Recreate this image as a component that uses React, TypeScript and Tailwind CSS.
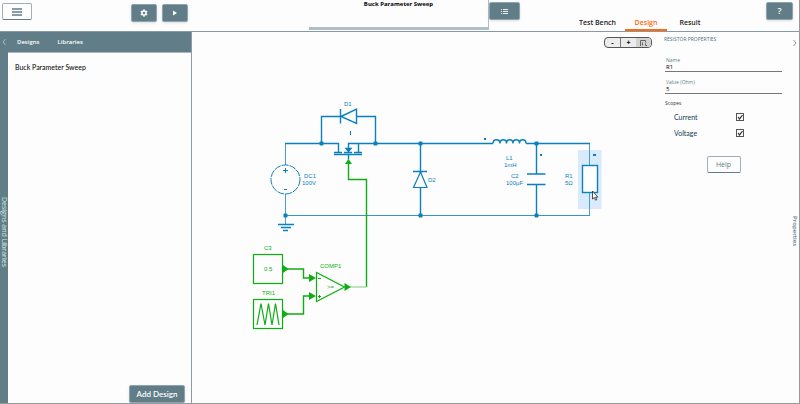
import React, { useState } from 'react';

const BLUE = '#0a81bd';
const GREEN = '#0cae12';

const solidButton =
  'flex items-center justify-center rounded-xs bg-[#607d88] text-white border border-[#8fa5ae] shadow-sm';

function Header({ tab, onTab }: { tab: string; onTab: (t: string) => void }) {
  return (
    <header className="flex h-8 shrink-0 items-start border-b border-[#8799a5] pl-[2px] pr-[6px]">
      <button aria-label="Menu" className="mt-[3px] flex h-[17px] w-[30px] items-center justify-center rounded-xs border border-[#9db0ba] border-b-[#607d88]">
        <svg width="10" height="8" stroke="#607d88" strokeWidth="1.3">
          <path d="M0 1h10M0 4h10M0 7h10" />
        </svg>
      </button>
      <div className="ml-[99px] mt-1 flex gap-[5px]">
        <button aria-label="Settings" className={`${solidButton} h-[18px] w-[26px]`}>
          <svg width="8" height="8" viewBox="0 0 8 8">
            <circle cx="4" cy="4" r="2" fill="none" stroke="#fff" strokeWidth="1.5" />
            <path d="M4 .3v1.4M4 6.3v1.4M.8 2.1l1.2.7M6 5.2l1.2.7M.8 5.9L2 5.2M6 2.8l1.2-.7" stroke="#fff" strokeWidth="1.4" />
          </svg>
        </button>
        <button aria-label="Run" className={`${solidButton} h-[18px] w-[26px]`}>
          <svg width="4" height="6" fill="#fff">
            <path d="M0 .5L4 3 0 5.500z" />
          </svg>
        </button>
      </div>
      <div className="ml-[121px] h-[30px] min-w-0 flex-1 border-b-[3px] border-r border-[#b0bec5] text-center">
        <h1 className="whitespace-nowrap text-[6px] font-bold leading-[8px] text-black">Buck Parameter Sweep</h1>
      </div>
      <button aria-label="List" className={`${solidButton} mt-[2px] h-[18px] w-[31px]`}>
        <svg width="7" height="7" fill="none" stroke="#e8eef0">
          <path d="M0 1.500h1M2 1.500h5M0 3.500h1M2 3.500h5M0 5.500h1M2 5.500h5" />
        </svg>
      </button>
      <nav className="ml-[52px] flex h-8 gap-[2px] self-end text-[7px] font-semibold leading-[8px]">
        {['Test Bench', 'Design', 'Result'].map((name) => (
          <button
            key={name}
            onClick={() => onTab(name)}
            className={`flex min-w-[42px] items-end justify-center border-b px-[7px] pb-[3px] ${
              tab === name ? 'border-[#ff6a0d] text-[#ff6a0d] shadow-[inset_0_-1px_0_#ff6a0d]' : 'border-transparent text-[#222]'
            }`}
          >
            {name}
          </button>
        ))}
      </nav>
      <button aria-label="Help" className={`${solidButton} ml-[55px] mt-[2px] h-[18px] w-[27px] text-[9px] font-semibold`}>
        ?
      </button>
    </header>
  );
}

function DesignsPanel() {
  return (
    <aside className="flex w-48 shrink-0 border-r border-[#8c9ca4]">
      <div className="flex w-2 shrink-0 flex-col items-center bg-[#607d88] text-[#dfe7ea]">
        <svg className="mt-[7px]" width="4" height="6" fill="none" stroke="#a9bac1">
          <path d="M3.500 0L1 3l2.500 3" />
        </svg>
        <span className="mt-[152px] whitespace-nowrap text-[7px] leading-[8px] [writing-mode:vertical-rl]">Designs and Libraries</span>
      </div>
      <div className="flex min-w-0 flex-1 flex-col">
        <div className="flex h-[21px] items-center gap-[18px] border-b border-[#a9b6bb] bg-[#607d88] px-[9px] text-[6px] font-semibold leading-[8px] text-white">
          <button>Designs</button>
          <button>Libraries</button>
        </div>
        <ul className="flex-1 px-[7px] pt-[10px] font-['Lato','Open_Sans',sans-serif] text-[7px] leading-[8px] text-black">
          <li>Buck Parameter Sweep</li>
        </ul>
        <div className="flex justify-end pr-[6px]">
          <button className={`${solidButton} h-[18px] w-[56px] whitespace-nowrap font-['Lato','Open_Sans',sans-serif] text-[8px] font-semibold leading-[10px]`}>Add Design</button>
        </div>
      </div>
    </aside>
  );
}

function Node({ x, y }: { x: number; y: number }) {
  return <rect x={x - 2} y={y - 2} width="4" height="4" rx="1" fill={BLUE} />;
}

function Schematic() {
  return (
    <svg viewBox="192 32 464 371" className="h-full w-full" fontSize="6" fontFamily="'Liberation Sans', Arial, sans-serif">
      {/* selection behind R1 */}
      <rect x="578" y="150" width="23.500" height="59" fill="#d8eafb" />

      <g fill="none" stroke={BLUE} strokeWidth="1.4">
        {/* thin wires */}
        <g stroke="#4a9fcb" strokeWidth="1">
          <path d="M285.500 143.500V165M285.500 194v30M589.500 143.500V165M589.500 193v22.500" />
          <path d="M285.500 215.500H590" strokeWidth="1.200" stroke="#3894c4" />
        </g>
        {/* top rail */}
        <path d="M285 143.500h53.500v9M348.500 152v-8.500H493M526 143.500h64M358.500 143.500v9" />
        {/* MOSFET */}
        <path d="M334 152.500h8M344 152.500h8M354 152.500h8M334 154.500h28M348.500 154.500v5" />
        <path d="M346 148.500h5l-2.500 3z" fill={BLUE} />
        <path d="M350.500 131v4" strokeWidth="1" />
        {/* D1 */}
        <path d="M321.500 143.500v-27H340M340.500 109v14.500M341 116.500l15.500-7.500v14.500zM356.500 116.500h19v27" />
        {/* source */}
        <circle cx="285.500" cy="179.500" r="14.500" strokeWidth="1" strokeDasharray="7 1" />
        <path d="M283 170.500h5M285.500 168v5M284 189.500h3" strokeWidth="1" />
        {/* ground */}
        <path d="M278 224.500h16M281 227.500h10M283 230.500h5" />
        {/* D2 */}
        <path d="M420.500 143.500V215.500M413 171.500h14" />
        <path d="M420.500 172l6.500 15.500h-13.500z" fill="#fdfdfd" strokeWidth="1.2" />
        {/* L1 */}
        <path d="M493 143.500c0-5 7-5 7 0 0-5 6.500-5 6.500 0 0-5 6.500-5 6.500 0 0-5 6.500-5 6.500 0 0-5 6.500-5 6.500 0" />
        {/* C2 */}
        <path d="M536.500 143.500V174M536.500 185v30.500M527 174h18.500M527 184.500h18.500" />
        {/* R1 */}
        <rect x="582.500" y="165.500" width="15" height="27" fill="#fff" />
      </g>

      <Node x={321.5} y={143.5} />
      <Node x={375.5} y={143.5} />
      <Node x={420.5} y={143.5} />
      <Node x={536.5} y={143.5} />
      <Node x={285.5} y={215.5} />
      <Node x={420.5} y={215.5} />
      <Node x={536.5} y={215.5} />
      <g fill={BLUE}>
        <path d="M484 138h2v2h-2zM540 154h2v2h-2zM593 154h3v2h-3z" />
        <text x="344" y="106">D1</text>
        <text x="304" y="178">DC1</text>
        <text x="302" y="185">100V</text>
        <text x="428" y="182">D2</text>
        <text x="506" y="160">L1</text>
        <text x="504" y="167">1mH</text>
        <text x="511" y="178">C2</text>
        <text x="506" y="185">100µF</text>
        <text x="565" y="178">R1</text>
        <text x="565" y="185">5Ω</text>
      </g>

      <g fill="none" stroke={GREEN} strokeWidth="1.4">
        {/* gate drive */}
        <path d="M348.500 163v16.500h18v107.500" />
        <path d="M366.500 287H350" stroke="#9bdc9d" />
        <path d="M282.500 269h21v9H310M282.500 314h21v-18H310" />
        <rect x="253.500" y="254.500" width="29" height="29" strokeWidth="1.2" />
        <rect x="253.500" y="299.500" width="29" height="29" strokeWidth="1.2" />
        <path d="M257 325l4-21.500 4 21.500 3.500-21.500 3.500 21.500 3.500-21.500 3.500 21.500" strokeWidth="1.2" />
        <path d="M316.500 272.500v29l28-14.500z" strokeWidth="1.2" />
        <path d="M318 278.500h3M318 296.500h3M319.500 295v3" strokeWidth="1" />
      </g>
      <g fill={GREEN}>
        <path d="M348.500 159l3.500 5h-7zM283 265l5.500 4-5.500 4zM283 310l5.500 4-5.500 4zM309 274l7 4-7 4zM309 292l7 4-7 4zM344.500 283l6.500 4-6.500 4z" />
        <text x="264" y="250">C3</text>
        <text x="264" y="271">0.5</text>
        <text x="262" y="295">TRI1</text>
        <text x="320" y="268">COMP1</text>
        <text x="327" y="289">&gt;=</text>
      </g>

      {/* pointer */}
      <path d="M592.500 191v8l1.900-1.500 1.200 2.700 1.100-.5-1.100-2.600h2.200z" fill="#fff" stroke="#222" strokeWidth=".8" />
    </svg>
  );
}

function Canvas() {
  return (
    <main className="relative min-w-0 flex-1">
      <Schematic />
      <div className="absolute right-[4px] top-[5px] flex h-[11px] w-12 overflow-hidden rounded-sm border border-[#555] bg-[#ececec] text-[7px] font-bold leading-[8px] text-black">
        <button aria-label="Zoom out" className="flex-1 border-r border-[#777]">-</button>
        <button aria-label="Zoom in" className="flex-1">+</button>
        <button aria-label="Zoom to fit" className="flex flex-1 items-center justify-center bg-[#d3d3d3]">
          <svg width="7" height="7" fill="none" stroke="#666">
            <path d="M.5 7V1.500h5v2M2.500 3.500v3M5.500 4.500v2H7" />
          </svg>
        </button>
      </div>
    </main>
  );
}

function TextField({ id, label, value }: { id: string; label: string; value: string }) {
  return (
    <div className="mr-[9px] flex h-[22px] flex-col justify-end border-b border-[#777] pl-px">
      <label htmlFor={id} className="text-[5px] leading-[6px] text-[#607d88]">{label}</label>
      <input id={id} defaultValue={value} className="h-[8px] w-full text-[6px] leading-[8px] text-black outline-none" />
    </div>
  );
}

function CheckField({ id, label }: { id: string; label: string }) {
  return (
    <div className="flex h-4 items-center pl-[9px] pr-[47px]">
      <label htmlFor={id} className="flex-1 font-['Lato','Open_Sans',sans-serif] text-[7px] leading-[8px] text-[#123a55]">{label}</label>
      <span className="relative flex h-2 w-2">
        <input id={id} type="checkbox" defaultChecked className="peer h-2 w-2 appearance-none border border-[#555] bg-white" />
        <svg className="pointer-events-none absolute inset-0 hidden peer-checked:block" width="8" height="8" fill="none" stroke="#222" strokeWidth="1.1">
          <path d="M2 4l1.500 2L6.500 2" />
        </svg>
      </span>
    </div>
  );
}

function PropertiesPanel() {
  return (
    <aside className="flex w-[143px] shrink-0 pl-[9px]">
      <div className="min-w-0 flex-1">
        <h2 className="-ml-px mt-[3px] text-[5px] leading-[8px] text-[#52717e]">RESISTOR PROPERTIES</h2>
        <div className="mt-[7px]">
          <TextField id="name" label="Name" value="R1" />
          <TextField id="value" label="Value (Ohm)" value="5" />
        </div>
        <h3 className="mt-[5px] text-[5px] leading-[8px] text-[#333]">Scopes</h3>
        <div className="mt-[2px]">
          <CheckField id="current" label="Current" />
          <CheckField id="voltage" label="Voltage" />
        </div>
        <div className="mt-[15px] flex justify-center pr-[9px]">
          <button className="h-[17px] w-[34px] rounded-xs border border-[#9db0ba] border-b-[#607d88] text-[7px] leading-[10px] text-[#607d88]">Help</button>
        </div>
      </div>
      <div className="flex w-2 shrink-0 flex-col items-center text-[#607d88]">
        <svg className="mt-2" width="4" height="6" fill="none" stroke="#8d999e">
          <path d="M.5 0L3 3 .5 6" />
        </svg>
        <span className="mt-[170px] whitespace-nowrap text-[6px] font-semibold leading-[6px] [writing-mode:vertical-rl]">Properties</span>
      </div>
    </aside>
  );
}

export default function App() {
  const [tab, setTab] = useState('Design');

  return (
    <div className="flex h-screen flex-col overflow-hidden border-b border-r border-[#999] bg-[#fdfdfd] font-['Open_Sans','Noto_Sans',sans-serif]">
      <Header tab={tab} onTab={setTab} />
      <div className="flex min-h-0 flex-1">
        <DesignsPanel />
        <Canvas />
        <PropertiesPanel />
      </div>
    </div>
  );
}
